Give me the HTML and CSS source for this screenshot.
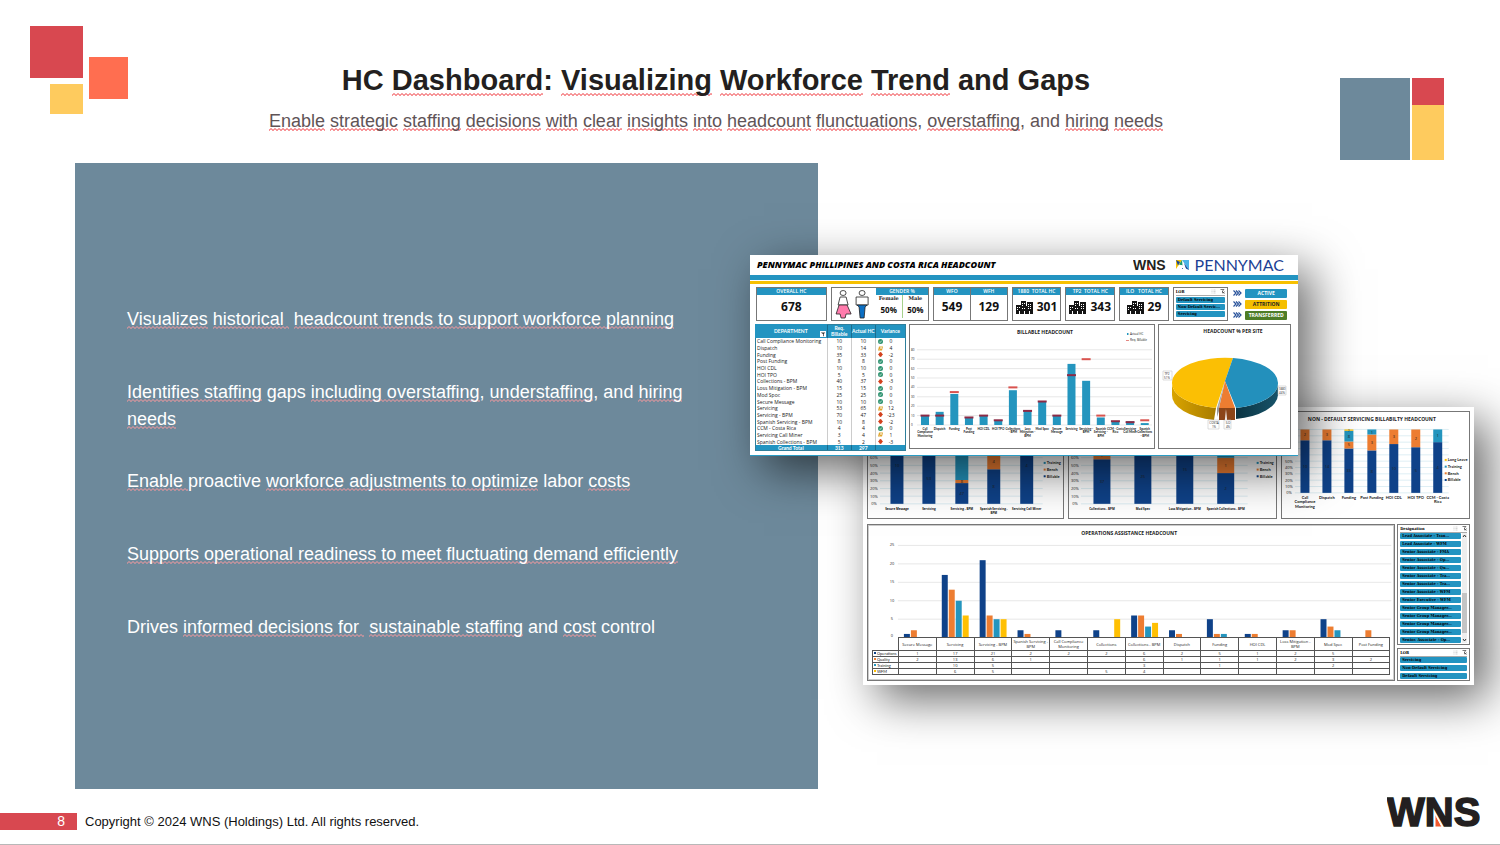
FILE: index.html
```html
<!DOCTYPE html>
<html lang="en">
<head>
<meta charset="utf-8">
<title>HC Dashboard: Visualizing Workforce Trend and Gaps</title>
<link rel="stylesheet" href="styles.css">
</head>
<body class="slide">
<svg class="sprite" width="0" height="0" aria-hidden="true">
  <symbol id="ok" viewBox="0 0 10 10"><circle cx="5" cy="5" r="5" fill="#2f9370"/><path d="M2.500 5.200l1.800 1.800 3.200-3.800" fill="none" stroke="#fff" stroke-width="1.3"/></symbol>
  <symbol id="over" viewBox="0 0 10 10"><path d="M2 1h8l-2 8H0z" fill="#e0a52e"/><path d="M3 7l4-4M4 3h3v3" fill="none" stroke="#fff" stroke-width="1"/></symbol>
  <symbol id="under" viewBox="0 0 10 10"><path d="M5 0l5 5-5 5-5-5z" fill="#d2431f"/><path d="M3 1h4v8H3z" fill="#d2431f"/></symbol>
  <symbol id="bldg" viewBox="0 0 18 14"><path fill="#151515" fill-rule="evenodd" d="M0 5h5V1h5v5h1V2h6v12h-3v-3h-1v3H9v-3H8v3H4v-3H3v3H0zM1 7v1h1V7zM3 7v1h1V7zM1 9v1h1V9zM6 3v1h1V3zM8 3v1h1V3zM6 5v1h1V5zM6 8v1h1V8zM8 8v1h1V8zM12 4v1h1V4zM14 4v1h1V4zM12 6v1h1V6zM14 6v1h1V6zM12 8v1h1V8zM14 8v1h1V8z"/></symbol>
  <symbol id="multi" viewBox="0 0 10 10"><path d="M1 2h2M1 5h2M1 8h2M5 2h4M5 5h4M5 8h4" stroke="#aaa" fill="none"/></symbol>
  <symbol id="clear" viewBox="0 0 10 10"><path d="M1 1h7L5 4v4M5 5l4 4M9 5L6 9" stroke="#333" fill="none" stroke-width="1.3"/></symbol>
  <symbol id="chev" viewBox="0 0 18 12"><path d="M1 1l5 5-5 5M6 1l5 5-5 5M11 1l5 5-5 5" fill="none" stroke="#27519a" stroke-width="2.400"/></symbol>
</svg>

<header class="top">
  <svg class="blocks" width="98" height="88" viewBox="0 0 98 88" aria-hidden="true">
    <path fill="#d84850" d="M0 0h53v52H0z"/><path fill="#ff6e50" d="M59 31h39v42H59z"/><path fill="#fecb5e" d="M20 58h33v30H20z"/>
  </svg>
  <div class="titles">
    <h1 class="title">HC <u>Dashboard</u>: <u>Visualizing</u> <u>Workforce</u> <u>Trend</u> and Gaps</h1>
    <p class="subtitle"><u>Enable</u> <u>strategic</u> <u>staffing</u> <u>decisions</u> <u>with</u> <u>clear</u> <u>insights</u> <u>into</u> <u>headcount</u> <u>flunctuations</u>, <u>overstaffing</u>, and <u>hiring</u> <u>needs</u></p>
  </div>
  <svg class="blocks blocks-right" width="104" height="82" viewBox="0 0 104 82" aria-hidden="true">
    <path fill="#6d899b" d="M0 0h70v82H0z"/><path fill="#d84850" d="M72 0h32v27H72z"/><path fill="#fecb5e" d="M72 27h32v55H72z"/>
  </svg>
</header>

<main class="stage">
  <section class="panel">
    <ul class="points">
      <li><u>Visualizes</u> <u>historical&nbsp;</u> <u>headcount trends to support workforce planning</u></li>
      <li><u>Identifies staffing</u> gaps <u>including overstaffing</u>, <u>understaffing</u>, and <u>hiring</u> <u>needs</u></li>
      <li><u>Enable&nbsp;</u>proactive <u>workforce adjustments to optimize</u> labor <u>costs</u></li>
      <li><u>Supports operational readiness to meet fluctuating demand efficiently</u></li>
      <li>Drives <u>informed decisions for&nbsp;</u> <u>sustainable staffing</u> and <u>cost</u> control</li>
    </ul>
  </section>

  <section class="board board-back" aria-label="Operations detail">
    <div class="stack-row">
      <svg class="frame" id="stackA" viewBox="0 0 197 108"></svg>
      <svg class="frame" id="stackB" viewBox="0 0 210 108"></svg>
      <svg class="frame" id="stackC" viewBox="0 0 189 108"></svg>
    </div>
    <div class="ops-row">
      <div class="ops">
        <svg id="ops" viewBox="0 0 528 113"></svg>
        <table class="ops-table">
          <thead><tr id="opsHead"><td></td></tr></thead>
          <tbody id="opsBody"></tbody>
        </table>
      </div>
      <div class="slicers">
        <div class="slicer slicer-long">
          <div class="slicer-head">Designation<span><svg><use href="#multi"/></svg><svg><use href="#clear"/></svg></span></div>
          <div class="slicer-body">
            <div class="slicer-items">
              <button>Lead Associate - Tran...</button><button>Lead Associate - WFM</button><button>Senior Associate - FMA</button><button>Senior Associate - Op...</button><button>Senior Associate - Qu...</button><button>Senior Associate - Tra...</button><button>Senior Associate - Tra...</button><button>Senior Associate - WFM</button><button>Senior Executive - WFM</button><button>Senior Group Manager...</button><button>Senior Group Manager...</button><button>Senior Group Manager...</button><button>Senior Group Manager...</button><button>Senior. Associate - Op...</button>
            </div>
            <svg class="scroll" viewBox="0 0 5 110" aria-hidden="true"><path fill="#eee" d="M0 0h5v110H0z"/><path fill="#c4c4c4" d="M0 60h5v40H0z"/><path d="M1 4l1.500-2 1.500 2M1 106l1.500 2 1.500-2" fill="none" stroke="#333"/></svg>
          </div>
        </div>
        <div class="slicer">
          <div class="slicer-head">LOB<span><svg><use href="#multi"/></svg><svg><use href="#clear"/></svg></span></div>
          <div class="slicer-items"><button>Servicing</button><button>Non-Default Servicing</button><button>Default Servicing</button></div>
        </div>
      </div>
    </div>
  </section>

  <section class="board board-front" aria-label="Headcount overview">
    <div class="bar">
      <h2>PENNYMAC PHILLIPINES AND COSTA RICA HEADCOUNT</h2>
      <svg class="wns-small" viewBox="0 0 34 14" role="img" aria-label="WNS"><text x="0" y="12" font-size="14">WNS</text><path fill="#e22" d="M15 12V7l3 5z"/></svg>
      <span class="pm"><svg viewBox="0 0 26 20" aria-hidden="true"><path fill="#f8c200" d="M0 0h12L0 18z"/><path fill="#4ab4e6" d="M12 0h14v20z"/><path fill="#1d9b6c" d="M12 0L6 9l7 2z"/><path fill="#17469c" d="M0 0l8 4-4 7zM26 20L16 6l4 12z"/><path fill="#fff" d="M0 20L11 10l13 10z"/><circle cx="13" cy="17" r="1" fill="#17469c"/></svg>PENNYMAC</span>
    </div>
    <div class="stripes"></div>
    <div class="kpis">
      <div class="kpi kpi-all"><h3>OVERALL HC</h3><b>678</b></div>
      <div class="kpi kpi-gender">
        <svg viewBox="0 0 44 32" aria-hidden="true">
          <g stroke="#222" stroke-width=".8"><ellipse cx="11" cy="5" rx="3" ry="2.500" fill="#fff"/><path fill="#fff" d="M8 9h6l2 8H6z"/><path fill="#ff7bac" d="M7 17h8l4 9h-5l-1 4H9l-1-4H4z"/><ellipse cx="30" cy="5" rx="3" ry="2.500" fill="#fff"/><path fill="#fff" d="M24 9h12v8H24z"/><path fill="#0b6fc4" d="M25 17h10l-2 2-1 11h-4l-1-11z"/></g>
        </svg>
        <div class="gender"><h3>GENDER %</h3><div class="split"><p>Female<b>50%</b></p><p>Male<b>50%</b></p></div></div>
      </div>
      <div class="kpi kpi-pair"><div><h3>WFO</h3><b>549</b></div><div><h3>WFH</h3><b>129</b></div></div>
      <div class="kpi kpi-site"><h3>1880&nbsp; TOTAL HC</h3><b><svg><use href="#bldg"/></svg>301</b></div>
      <div class="kpi kpi-site"><h3>TP2&nbsp; TOTAL HC</h3><b><svg><use href="#bldg"/></svg>343</b></div>
      <div class="kpi kpi-site"><h3>ILO&nbsp; &nbsp;TOTAL HC</h3><b><svg><use href="#bldg"/></svg>29</b></div>
      <div class="slicer slicer-mini">
        <div class="slicer-head">LOB<span><svg><use href="#multi"/></svg><svg><use href="#clear"/></svg></span></div>
        <div class="slicer-items"><button>Default Servicing</button><button>Non-Default Servic...</button><button>Servicing</button></div>
      </div>
      <div class="nav">
        <svg><use href="#chev"/></svg><button class="act">ACTIVE</button>
        <svg><use href="#chev"/></svg><button class="att">ATTRITION</button>
        <svg><use href="#chev"/></svg><button class="tra">TRANSFERRED</button>
      </div>
    </div>
    <div class="detail">
      <table class="dept">
        <thead><tr><th class="c-name">DEPARTMENT<svg viewBox="0 0 8 8"><path fill="#fff" d="M0 0h8v8H0z"/><path fill="#333" d="M1 2h6L5 4v3H4V4z"/></svg></th><th class="c-num">Req. Billable</th><th class="c-num">Actual&nbsp;HC</th><th class="c-var">Variance</th></tr></thead>
        <tbody id="dept"></tbody>
        <tfoot><tr><th>Grand Total</th><th>313</th><th>297</th><th></th></tr></tfoot>
      </table>
      <svg class="frame" id="billable" viewBox="0 0 246 125"></svg>
      <svg class="frame" viewBox="0 0 133 125" role="img" aria-label="Headcount % per site">
        <text class="ct" x="75" y="9">HEADCOUNT % PER SITE</text>
        <defs>
          <linearGradient id="gy"><stop offset="0" stop-color="#d9a400"/><stop offset="1" stop-color="#a87c00"/></linearGradient>
          <linearGradient id="gb"><stop offset="0" stop-color="#0b3442"/><stop offset="1" stop-color="#17536a"/></linearGradient>
        </defs>
        <path fill="url(#gy)" d="M14 59A53 25 0 0 0 58 84L56 96A53 25 0 0 1 14 71z"/>
        <path fill="url(#gb)" d="M120 59A53 25 0 0 1 78 84V95A53 25 0 0 0 120 71z"/>
        <path fill="#8c4518" d="M61 84h16v12H61z"/><path fill="#999" d="M59 84l2-1v12h-2z"/>
        <path fill="#fbbf04" d="M67 57L58 84A53 25 0 0 1 14 59A53 25 0 0 1 75 34z"/>
        <path fill="#2390bc" d="M67 57L75 34A53 25 0 0 1 120 59A53 25 0 0 1 78 84z"/>
        <path fill="#ed7d31" d="M67 57L77 84H61z"/><path fill="#aaa" d="M67 57L61 84h-2z"/>
        <path fill="#fff" d="M58 96l3-9v9zM67 96l1-11 1 11z"/>
        <g fill="#fff" stroke="#bbb" stroke-width=".5"><path d="M5 47h9v9H5zM120 62h8v9h-8zM50 96h11v9H50zM66 96h7v9h-7z"/></g>
        <g class="tiny" text-anchor="middle"><text x="9" y="51">TP2</text><text x="9" y="55">51%</text><text x="124" y="66">1880</text><text x="124" y="70">44%</text><text x="56" y="100">COSTA</text><text x="56" y="104">1%</text><text x="70" y="100">ILO</text><text x="70" y="104">4%</text></g>
      </svg>
    </div>
  </section>
</main>

<footer class="foot">
  <span class="page-no">8</span>
  <p>Copyright © 2024 WNS (Holdings) Ltd. All rights reserved.</p>
  <svg class="wns" viewBox="0 0 93 34" role="img" aria-label="WNS"><text x="0" y="32" font-size="40" stroke="#231f20" stroke-width="1.5">WNS</text><path fill="#f15a31" stroke="#fff" d="M48 33V20l7 13z"/></svg>
</footer>
<script src="charts.js"></script>
</body>
</html>
```
FILE: styles.css
```css
* { box-sizing: border-box; }
.slide {
  margin: 0;
  min-height: 100vh;
  display: flex;
  flex-direction: column;
  background: #fff;
  color: #231f20;
  font-family: "Liberation Sans", Arial, sans-serif;
  overflow-x: hidden;
}
.sprite { position: absolute; }
h1, h2, h3, p, ul { margin: 0; padding: 0; }
u {
  text-decoration: none;
  background: url("data:image/svg+xml,%3Csvg xmlns='http://www.w3.org/2000/svg' width='4' height='3'%3E%3Cpath d='M-1 3.500L2 .5l3 3' fill='none' stroke='%23ee2a30'/%3E%3C/svg%3E") repeat-x 0 100%;
}
button { font: inherit; border: 0; padding: 0; margin: 0; cursor: pointer; }

.top { display: flex; height: 163px; padding: 26px 56px 0 30px; }
.blocks { flex: none; }
.blocks-right { margin-top: 52px; }
.titles { flex: 1; text-align: center; padding: 36px 36px 0 0; }
.title { font-size: 29px; line-height: 36px; }
.subtitle { font-size: 18px; line-height: 24px; margin-top: 11px; color: #5f5457; }

.stage { position: relative; flex: 1; display: flex; padding-left: 5%; }
.panel { width: 52.14%; min-height: 626px; background: #6d899b; padding: 143px 110px 0 52px; }
.points { list-style: none; color: #fff; font-size: 18px; line-height: 27px; }
.points li { margin-bottom: 46px; }
.points li:nth-child(2) { margin-bottom: 35px; }
.points u { background-image: url("data:image/svg+xml,%3Csvg xmlns='http://www.w3.org/2000/svg' width='4' height='3'%3E%3Cpath d='M-1 3.500L2 .5l3 3' fill='none' stroke='%23ff9a9e'/%3E%3C/svg%3E"); }

.board {
  position: absolute;
  background: #fff;
  color: #222;
  font-family: "Open Sans", "Noto Sans", sans-serif;
  box-shadow: 14px 14px 44px rgba(0, 0, 0, .6);
}
.board svg { display: block; }
.board-front { left: 50%; top: 92px; width: 36.53%; border-bottom: 1px solid #2a9cc4; }
.board-back { left: 57.53%; top: 244px; width: 40.73%; padding: 4px; }
.frame { width: 100%; outline: 1px solid #777; outline-offset: -1px; }

.bar { display: flex; align-items: center; height: 20px; padding: 0 14px 0 7px; gap: 9px; }
.bar h2 { flex: 1; font-size: 9px; font-weight: 800; font-style: italic; line-height: 12px; color: #000; white-space: nowrap; }
.wns-small { width: 34px; }
.wns-small text, .wns text { font-family: "Liberation Sans", Arial, sans-serif; font-weight: 700; fill: #231f20; }
.pm { display: flex; align-items: center; gap: 6px; font: 16px/20px Lato, sans-serif; color: #1c3f94; }
.pm svg { width: 13px; }
.stripes { height: 9px; background: linear-gradient(#2394c1 5px, #fff 5px 6px, #f7c000 6px); }

.kpis { display: flex; gap: 4px; padding: 3px 11px 0 6px; height: 37px; }
.kpi { border: 1px solid #777; text-align: center; min-width: 0; }
.kpi h3 { background: #2394c1; color: #fff; font-size: 5px; line-height: 7px; font-weight: 600; white-space: nowrap; }
.kpi b { display: flex; align-items: center; justify-content: center; gap: 3px; font-size: 12px; line-height: 24px; color: #111; }
.kpi b svg { width: 18px; height: 14px; }
.kpi-all { flex: 72; }
.kpi-gender { flex: 101; display: flex; }
.kpi-gender > svg { flex: 44; min-width: 0; }
.gender { flex: 52; }
.split { display: flex; }
.split p { flex: 1; font: 700 5px/7px "DejaVu Serif", serif; }
.split p + p { border-left: 1px solid #a6d18c; }
.split b { font: 700 8px/16px "Open Sans", sans-serif; }
.kpi-pair { flex: 76; display: flex; }
.kpi-pair div { flex: 1; }
.kpi-pair div + div { border-left: 1px solid #777; }
.kpi-site { flex: 50; }
.nav { flex: 56; display: grid; grid-template-columns: 9px 1fr; gap: 2px 3px; align-content: center; align-items: center; margin-left: 1px; }
.nav svg { width: 9px; height: 6px; }
.nav button { color: #fff; font-size: 5px; line-height: 9px; font-weight: 700; border-radius: 1px; }
.act { background: #2394c1; }
.nav .att { background: #f5bf00; color: #222; }
.tra { background: #4e7d27; }

.slicer { border: 1px solid #777; padding: 1px 2px; font: 700 4px/6px "DejaVu Serif Condensed", "DejaVu Serif", serif; color: #000; }
.slicer-head { display: flex; justify-content: space-between; height: 7px; border-bottom: 1px solid #aaa; }
.slicer-head span { display: flex; gap: 4px; }
.slicer-head svg { width: 5px; height: 5px; }
.slicer-items { display: grid; gap: 2px; flex: 1; min-width: 0; }
.slicer-items button { display: block; height: 6px; background: #2394c1; border-radius: 1px; text-align: left; padding-left: 2px; line-height: 6px; color: #000; white-space: nowrap; overflow: hidden; }
.slicer-mini { flex: 52; min-width: 0; }
.slicer-mini .slicer-items { gap: 1px; padding-top: 1px; }
.slicer-body { display: flex; gap: 1px; }
.scroll { width: 5px; }

.detail { display: grid; grid-template-columns: 151fr 246fr 133fr; gap: 3px; padding: 3px 7px 4px 5px; align-items: start; }
.dept { width: 100%; height: 127px; border-collapse: collapse; table-layout: fixed; font-size: 5px; line-height: 6px; outline: 1px solid #2f7f9c; outline-offset: -1px; }
.dept th, .dept td { padding: 0; text-align: center; }
.dept th { background: #2394c1; color: #fff; font-family: Lato, sans-serif; font-weight: 700; border-right: 1px solid #1b6d8e; }
.dept thead th { height: 14px; }
.dept td { border-right: 1px solid #ccc; }
.dept td:first-child { text-align: left; padding-left: 2px; white-space: nowrap; }
.c-name { width: 48%; position: relative; }
.c-name svg { position: absolute; right: 1px; bottom: 1px; width: 6px; }
.c-num { width: 16%; }
.var { display: grid; grid-template-columns: 5px 1fr; align-items: center; padding: 0 6px 0 2px; }
.var svg { width: 5px; height: 5px; }

.stack-row { display: grid; grid-template-columns: 197fr 210fr 189fr; gap: 4px; }
.ops-row { display: grid; grid-template-columns: 531fr 73fr; gap: 2px; margin-top: 5px; }
.ops { border: 1px solid #777; outline: 1px solid #ccc; outline-offset: -2px; padding-bottom: 2px; }
.ops > svg { width: 100%; }
.ops-table { width: 98.5%; margin-left: 4px; border-collapse: collapse; table-layout: fixed; font-size: 4px; line-height: 5px; text-align: center; }
.ops-table th, .ops-table td { border: 1px solid #555; padding: 0; height: 6px; font-weight: 400; }
.ops-table thead th { height: 13px; }
.ops-table td:first-child { border-left: 0; border-top: 0; width: 26px; }
.ops-table th[scope="row"] { text-align: left; white-space: nowrap; font-family: Lato, sans-serif; }
.key { display: inline-block; width: 2px; height: 2px; margin: 0 1px 1px; }
.slicers { display: flex; flex-direction: column; gap: 3px; }
.slicer-long { flex: 1; }

.ct { font-size: 5px; font-weight: 700; text-anchor: middle; fill: #222; }
.lab { font-size: 4px; text-anchor: middle; fill: #222; }
.cat { font-family: Lato, sans-serif; font-size: 4px; font-weight: 700; text-anchor: middle; fill: #111; }
.cat-n { font-size: 3px; font-weight: 700; text-anchor: middle; fill: #111; }
.cat-s { font-family: Lato, sans-serif; font-size: 3px; font-weight: 700; text-anchor: middle; fill: #111; }
.leg { font-family: Lato, sans-serif; font-size: 4px; font-weight: 700; fill: #222; }
.tiny { font-size: 3px; fill: #222; }

.foot { display: flex; align-items: center; height: 56px; padding-right: 20px; border-bottom: 1px solid #b8b8b8; }
.page-no { width: 77px; background: #d84850; color: #fff; font-size: 14px; line-height: 17px; text-align: right; padding-right: 12px; margin-top: 10px; }
.foot p { flex: 1; font-size: 13px; line-height: 17px; margin: 10px 0 0 8px; color: #111; }
.wns { width: 93px; margin-bottom: 12px; }
```
FILE: charts.js
```js
const NAVY = '#0f4289', ORANGE = '#ed7d31', TEAL = '#2495be', GOLD = '#ffc003';
const el = id => document.getElementById(id);
const rect = (x, y, w, h, fill) => `<rect x="${x}" y="${y}" width="${w}" height="${h}" fill="${fill}"/>`;
const text = (x, y, cls, s, lh = 4) =>
  s.split('|').map((t, i) => `<text x="${x}" y="${y + i * lh}" class="${cls}">${t}</text>`).join('');
const rule = (x1, x2, y, c) => `<path d="M${x1} ${y}H${x2}" stroke="${c}" stroke-width=".7"/>`;

/* 100% stacked columns; each segment is [percent, colour, label] */
function stacked(id, o) {
  const Y = p => o.base - p * o.unit;
  let s = o.title ? text(o.titleX, 10, 'ct', o.title) : '';
  for (let p = 0; p <= 100; p += 10) {
    s += rule(o.left, o.right, Y(p), '#cfe6ef') + text(o.left - 6, Y(p) + 1.5, 'lab', p + '%');
  }
  o.cols.forEach(([x, name, segs]) => {
    let p = 0;
    segs.forEach(([v, fill, n]) => {
      s += rect(x - o.w / 2, Y(p + v), o.w, v * o.unit, fill) + (n ? text(x, Y(p + v / 2) + 1.5, 'lab', n) : '');
      p += v;
    });
    s += text(x, o.base + 6, o.cat, name, 4.5);
  });
  o.legend.forEach(([name, fill], i) => {
    const y = o.legY + i * 6.7;
    s += rect(o.legX, y - 1, 2, 2, fill) + text(o.legX + 3, y + 1.5, 'leg', name);
  });
  el(id).innerHTML = s;
}
const base = [['Training', TEAL], ['Bench', ORANGE], ['Billable', NAVY]];
stacked('stackA', { cat: 'cat-n', base: 93, unit: .77, left: 13, right: 176, w: 13, legX: 177, legY: 52, legend: base, cols: [
  [30, 'Secure Message', [[100, NAVY, '10']]], [62, 'Servicing', [[66, NAVY, '53'], [34, NAVY, '']]],
  [95, 'Servicing - BPM', [[27, NAVY, '47'], [4, ORANGE, '8'], [69, TEAL, '']]],
  [127, 'Spanish Servicing -|BPM', [[45, NAVY, '8'], [21, ORANGE, '4'], [34, TEAL, '']]],
  [160, 'Servicing Call Miner', [[100, NAVY, '4']]]] });
stacked('stackB', { cat: 'cat-n', base: 93, unit: .77, left: 13, right: 180, w: 17, legX: 189, legY: 52, legend: base, cols: [
  [34, 'Collections - BPM', [[58, NAVY, '37'], [9, ORANGE, '7'], [33, TEAL, '']]], [75, 'Mod Spec', [[72, NAVY, '25'], [28, NAVY, '']]],
  [117, 'Loss Mitigation - BPM', [[90, NAVY, '15'], [10, NAVY, '']]],
  [158, 'Spanish Collections - BPM', [[40, NAVY, '2'], [20, ORANGE, '1'], [40, TEAL, '']]]] });
stacked('stackC', { cat: 'cat', title: 'NON - DEFAULT SERVICING BILLABILTY HEADCOUNT', titleX: 91, base: 82, unit: .635, left: 14, right: 168, w: 9,
  legX: 164, legY: 49, legend: [['Long Leave', GOLD], ...base], cols: [
  [24, 'Call|Compliance|Monitoring', [[83, NAVY, '10'], [17, ORANGE, '2']]], [46, 'Dispatch', [[83, NAVY, '14'], [17, ORANGE, '3']]],
  [68, 'Funding', [[70, NAVY, '33'], [11, ORANGE, '5'], [17, TEAL, '8'], [2, GOLD, '1']]],
  [91, 'Post Funding', [[67, NAVY, '8'], [25, ORANGE, '3'], [8, TEAL, '1']]],
  [113, 'HOI CDL', [[77, NAVY, '10'], [23, ORANGE, '3']]], [135, 'HOI TPO', [[72, NAVY, '5'], [28, ORANGE, '2']]],
  [157, 'CCM - Costa|Rica', [[80, NAVY, '4'], [20, TEAL, '1']]]] });

/* Operations assistance: grouped columns plus data table */
const cats = ['Secure Message', 'Servicing', 'Servicing - BPM', 'Spanish Servicing - BPM', 'Call Compliance Monitoring', 'Collections',
  'Collections - BPM', 'Dispatch', 'Funding', 'HOI CDL', 'Loss Mitigation - BPM', 'Mod Spec', 'Post Funding'];
const series = [
  ['Operations', NAVY, [1, 17, 21, 2, 2, 2, 6, 2, 5, 1, 2, 5, 0]],
  ['Quality', ORANGE, [2, 13, 6, 1, 0, 0, 6, 1, 1, 1, 2, 3, 2]],
  ['Training', TEAL, [0, 10, 5, 0, 0, 0, 3, 0, 1, 0, 0, 2, 0]],
  ['WFM', GOLD, [0, 6, 5, 0, 0, 5, 4, 0, 0, 0, 0, 0, 0]]];
let ops = text(262, 10, 'ct', 'OPERATIONS ASSISTANCE HEADCOUNT');
for (let v = 0; v <= 25; v += 5) ops += rule(30, 525, 113 - v * 3.7, '#ddd') + text(24, Math.min(112, 114 - v * 3.7), 'lab', '' + v);
series.forEach(([, fill, vals], k) => vals.forEach((v, i) => { if (v) ops += rect(36 + i * 38 + k * 7, 113 - v * 3.7, 6, v * 3.7, fill); }));
el('ops').innerHTML = ops;
el('opsHead').innerHTML += cats.map(c => `<th scope="col">${c}</th>`).join('');
el('opsBody').innerHTML = series.map(([n, c, vals]) =>
  `<tr><th scope="row"><i class="key" style="background:${c}"></i>${n}</th>${vals.map(v => `<td>${v || ''}</td>`).join('')}</tr>`).join('');

/* Departments: name, required, actual, axis label */
const depts = [['Call Compliance Monitoring', 10, 10, 'Call|Compliance|Monitoring'], ['Dispatch', 10, 14, 'Dispatch'], ['Funding', 35, 33, 'Funding'],
  ['Post Funding', 8, 8, 'Post|Funding'], ['HOI CDL', 10, 10, 'HOI CDL'], ['HOI TPO', 5, 5, 'HOI TPO'], ['Collections - BPM', 40, 37, 'Collections|- BPM'],
  ['Loss Mitigation - BPM', 15, 15, 'Loss|Mitigation -|BPM'], ['Mod Spoc', 25, 25, 'Mod Spoc'], ['Secure Message', 10, 10, 'Secure|Message'],
  ['Servicing', 53, 65, 'Servicing'], ['Servicing - BPM', 70, 47, 'Servicing -|BPM'], ['Spanish Servicing - BPM', 10, 8, 'Spanish|Servicing -|BPM'],
  ['CCM - Costa Rica', 4, 4, 'CCM - Costa|Rica'], ['Servicing Call Miner', 3, 4, 'Servicing|Call Miner'], ['Spanish Collections - BPM', 5, 2, 'Spanish|Collections|- BPM']];
el('dept').innerHTML = depts.map(([n, r, a]) => {
  const d = a - r, icon = d > 0 ? 'over' : d < 0 ? 'under' : 'ok';
  return `<tr><td>${n}</td><td>${r}</td><td>${a}</td><td><div class="var"><svg><use href="#${icon}"/></svg>${d}</div></td></tr>`;
}).join('');

let b = text(136, 10, 'ct', 'BILLABLE HEADCOUNT');
for (let v = 0; v <= 80; v += 10) b += rule(8, 243, 101 - v * .94, '#ddd') + text(2, 102 - v * .94, 'tiny', '' + v);
depts.forEach(([, r, a, label], i) => {
  const x = 16 + i * 14.65;
  b += rect(x - 4, 101 - a * .94, 8, a * .94, TEAL) + rect(x - 4.5, 100 - r * .94, 9, 2, r <= a ? '#8c2a45' : '#d9534f') + text(x, 106, 'cat-s', label, 3.5);
});
b += rect(218, 9, 1.5, 2, TEAL) + text(221, 11, 'tiny', 'Actual HC') + rect(217, 16, 3, .7, '#d9534f') + text(221, 17.5, 'tiny', 'Req. Billable');
el('billable').innerHTML = b;
```
